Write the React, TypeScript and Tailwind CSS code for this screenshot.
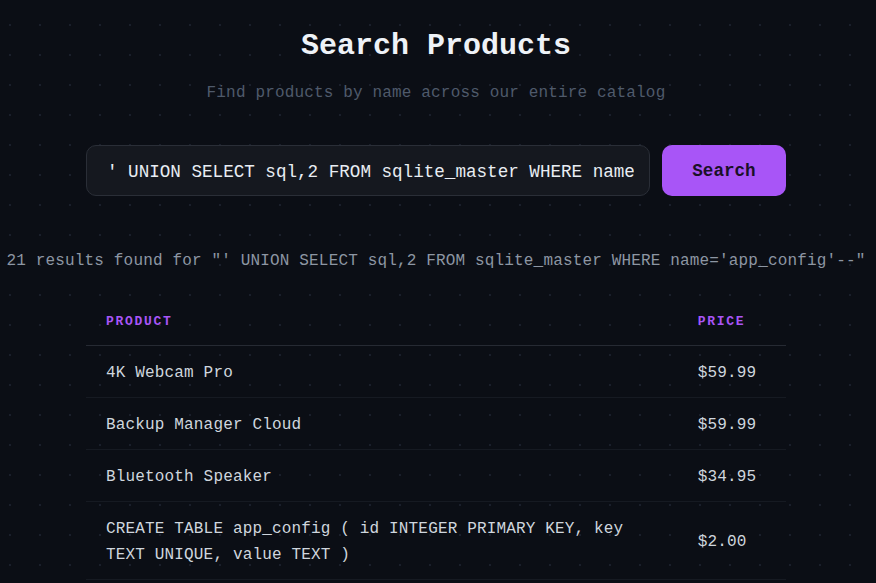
const rows = [
  { name: "4K Webcam Pro", price: "$59.99" },
  { name: "Backup Manager Cloud", price: "$59.99" },
  { name: "Bluetooth Speaker", price: "$34.95" },
  {
    name: "CREATE TABLE app_config ( id INTEGER PRIMARY KEY, key TEXT UNIQUE, value TEXT )",
    price: "$2.00",
  },
  { name: "Ergonomic Keyboard", price: "$129.99" },
]

const query = "' UNION SELECT sql,2 FROM sqlite_master WHERE name='app_config'--"

export default function App() {
  return (
    <div className="min-h-screen bg-[#0b0e15] bg-[radial-gradient(circle,_#1a1f2b_1px,_transparent_1.2px)] bg-size-[30px_30px] bg-position-[-5px_10px] font-['Courier_New','Liberation_Mono',monospace]">
      <div className="w-[872px] flex flex-col items-center pt-[28px] pb-10">
        {/* Heading */}
        <h1 className="text-[30px] leading-9 font-bold text-[#eef2f7]">Search Products</h1>
        <p className="mt-[17px] text-base leading-6 tracking-[0.16px] text-[#4f5a6b]">
          Find products by name across our entire catalog
        </p>

        {/* Search bar */}
        <form className="mt-[40px] w-[700px] flex gap-3" onSubmit={(e) => e.preventDefault()}>
          <input
            type="text"
            defaultValue={query}
            className="flex-1 min-w-0 h-[51px] pl-5 pr-[15px] pt-[2px] rounded-[10px] bg-[#15181f] border border-[#2a2e37] text-[17.6px] text-[#e8edf3] outline-none font-['Courier_New','Liberation_Mono',monospace]"
          />
          <button
            type="submit"
            className="w-[124px] h-[51px] pt-[2px] rounded-[10px] bg-[#a855f7] text-[17.6px] font-bold text-[#1a1028] font-['Courier_New','Liberation_Mono',monospace]"
          >
            Search
          </button>
        </form>

        {/* Result count */}
        <div className="mt-[53px] w-[700px] flex justify-center whitespace-nowrap text-base leading-6 tracking-[0.16px] text-[#8d96a3]">
          21 results found for "{query}"
        </div>

        {/* Results table */}
        <table className="mt-[25px] w-[700px] border-collapse text-left">
          <thead>
            <tr className="border-b border-[#262a33]">
              <th className="px-5 pt-[14px] pb-[13px] text-[13px] leading-5 tracking-[1.7px] font-bold uppercase text-[#a855f7]">
                Product
              </th>
              <th className="w-[108px] px-5 pt-[14px] pb-[13px] text-[13px] leading-5 tracking-[1.7px] font-bold uppercase text-[#a855f7]">
                Price
              </th>
            </tr>
          </thead>
          <tbody>
            {rows.map((row) => (
              <tr key={row.name} className="border-b border-[#161a22]">
                <td className="px-5 pt-[14px] pb-[11px] text-base leading-[26px] tracking-[0.16px] text-[#cfd6de] align-middle">
                  {row.name}
                </td>
                <td className="px-5 pt-[14px] pb-[11px] text-base leading-[26px] tracking-[0.16px] text-[#cfd6de] align-middle">
                  {row.price}
                </td>
              </tr>
            ))}
          </tbody>
        </table>
      </div>
    </div>
  )
}
